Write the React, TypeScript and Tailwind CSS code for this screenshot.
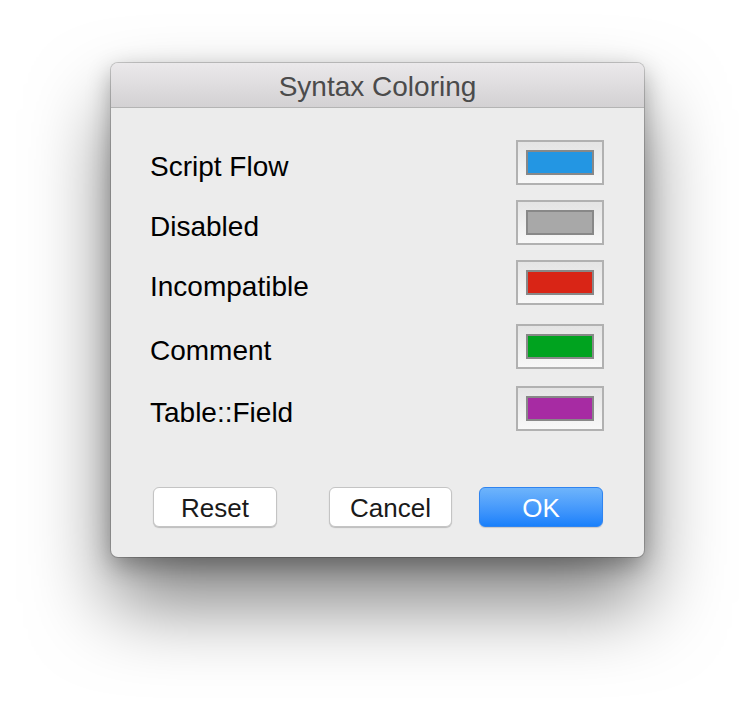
const rows = [
  { label: "Script Flow", color: "bg-[#2396e3]", mt: "mt-0" },
  { label: "Disabled", color: "bg-[#a8a8a8]", mt: "mt-[15px]" },
  { label: "Incompatible", color: "bg-[#d92516]", mt: "mt-[15px]" },
  { label: "Comment", color: "bg-[#00a31f]", mt: "mt-[19px]" },
  { label: "Table::Field", color: "bg-[#a72ba3]", mt: "mt-[17px]" },
];

const font = { fontFamily: '"Liberation Sans", Arial, sans-serif' };

function Swatch({ color }: { color: string }) {
  return (
    <div className="flex h-[45px] w-[88px] items-center justify-center border-2 border-[#b1b1b1] bg-gradient-to-b from-[#e4e4e4] to-[#f8f8f8]">
      <div className={`h-[25px] w-[68px] border-2 border-[#888888] ${color}`} />
    </div>
  );
}

export default function App() {
  return (
    <div className="min-h-[716px] w-full bg-white pt-[63px]" style={font}>
      <div className="ml-[111px] flex h-[494px] w-[533px] flex-col overflow-hidden rounded-[7px] bg-[#ececec] shadow-[0_0_0_1px_rgba(0,0,0,0.18),0_8px_24px_rgba(0,0,0,0.3),0_46px_80px_rgba(0,0,0,0.5)]">
        <div className="flex h-[45px] shrink-0 items-center justify-center border-b border-[#b4b4b4] bg-gradient-to-b from-[#ebe9eb] to-[#d3d1d3] pt-[4px]">
          <span className="text-[28px] leading-none text-[#4b4b4b]">Syntax Coloring</span>
        </div>

        <div className="flex flex-1 flex-col pl-[39px] pr-[40px] pt-[32px]">
          {rows.map((row) => (
            <div key={row.label} className={`flex items-center justify-between ${row.mt}`}>
              <span className="pt-[8px] text-[28px] leading-none text-black">{row.label}</span>
              <Swatch color={row.color} />
            </div>
          ))}

          <div className="mt-[56px] flex items-center pl-[3px]">
            <button className="h-[40px] w-[124px] rounded-[6px] border border-[#c4c4c4] bg-white pt-[2px] text-[26px] leading-none text-[#1a1a1a] shadow-[0_1px_1px_rgba(0,0,0,0.2)]">
              Reset
            </button>
            <button className="ml-[52px] h-[40px] w-[123px] rounded-[6px] border border-[#c4c4c4] bg-white pt-[2px] text-[26px] leading-none text-[#1a1a1a] shadow-[0_1px_1px_rgba(0,0,0,0.2)]">
              Cancel
            </button>
            <button className="ml-[27px] h-[40px] w-[124px] rounded-[6px] border border-[#2f84f0] bg-gradient-to-b from-[#6eb4fb] to-[#1880fb] pt-[2px] text-[26px] leading-none text-white shadow-[0_1px_1px_rgba(0,0,0,0.15)]">
              OK
            </button>
          </div>
        </div>
      </div>
    </div>
  );
}
